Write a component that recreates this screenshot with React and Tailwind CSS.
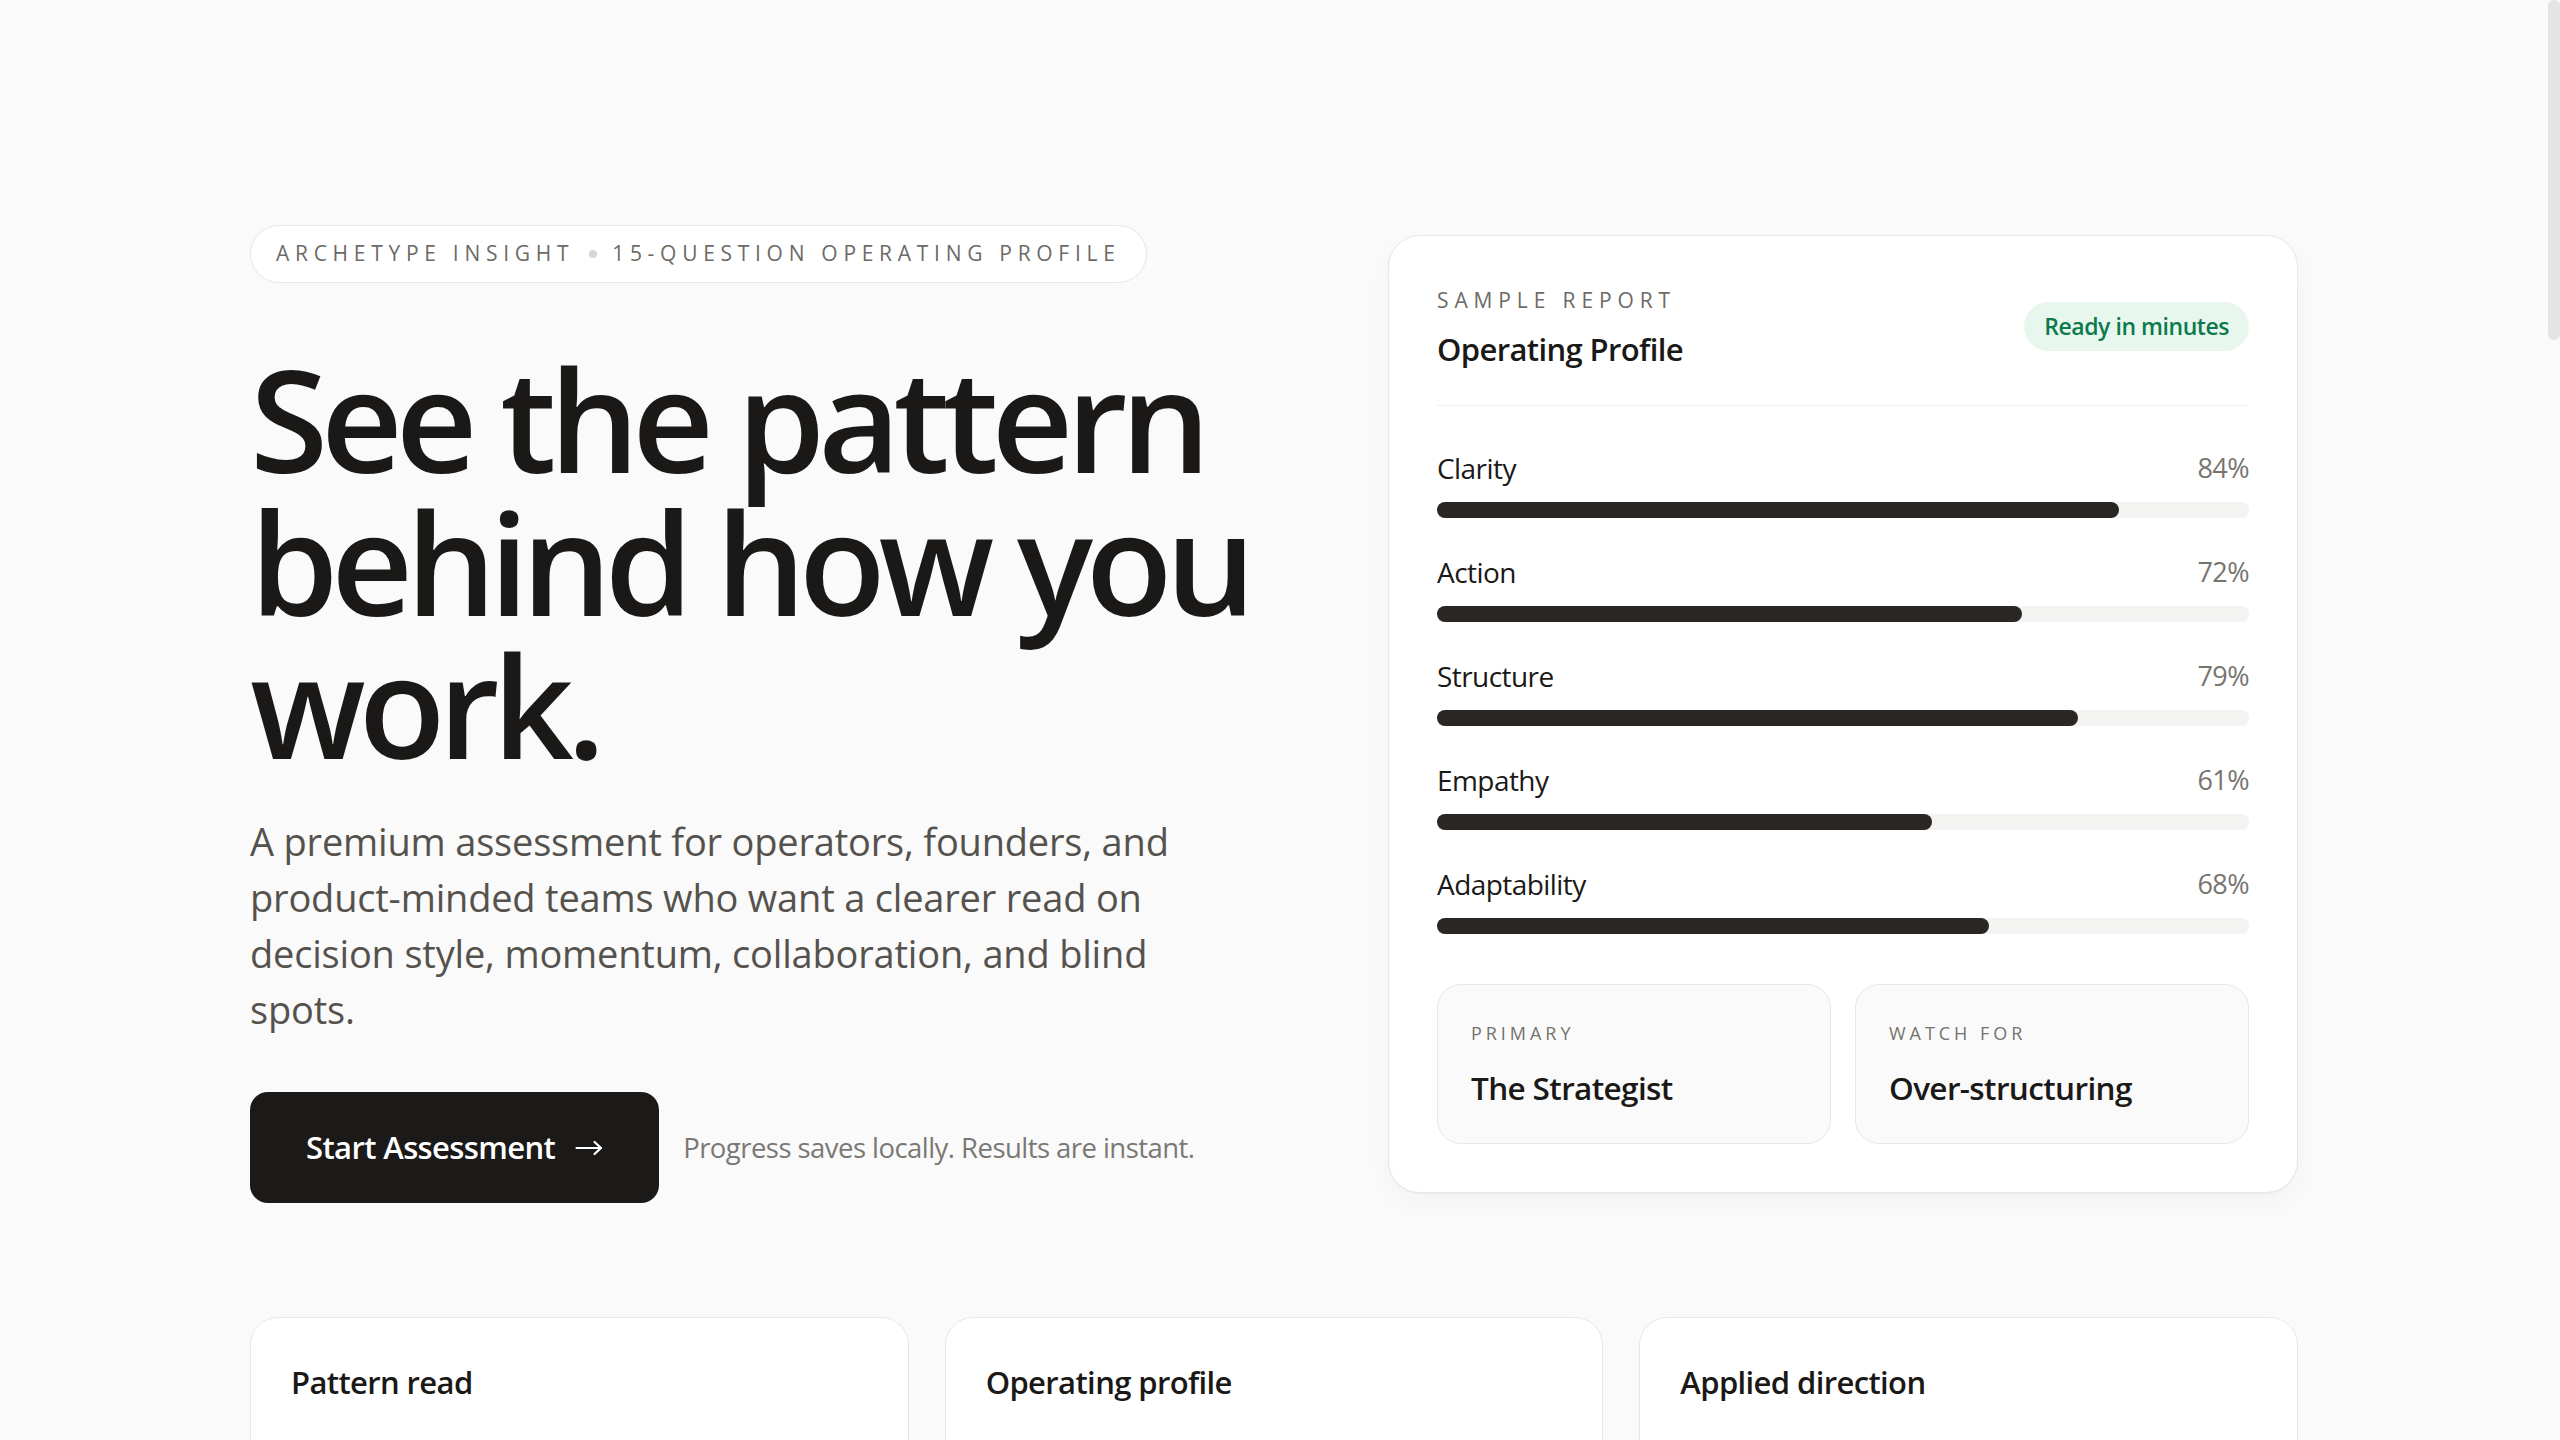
import React from "react";

const FONT = { fontFamily: '"Open Sans", "Noto Sans", "Liberation Sans", sans-serif' };

const metrics = [
  { label: "Clarity", value: 84 },
  { label: "Action", value: 72 },
  { label: "Structure", value: 79 },
  { label: "Empathy", value: 61 },
  { label: "Adaptability", value: 68 },
];

const features = [
  {
    title: "Pattern read",
    body: "A concise structured read that tracks how you decide, follow through, and frame the work in front of you.",
  },
  {
    title: "Operating profile",
    body: "Your result translates the main signals into a clear and practical portrait of how you operate.",
  },
  {
    title: "Applied direction",
    body: "The report focuses on better decisions, steadier momentum, and fewer blind spots in the work.",
  },
];

function Arrow() {
  return (
    <svg width="28" height="16" viewBox="0 0 28 16" fill="none" stroke="currentColor" strokeWidth="2.2" strokeLinecap="round" strokeLinejoin="round">
      <line x1="1.5" y1="8" x2="26" y2="8" />
      <polyline points="19.5,2 26,8 19.5,14" />
    </svg>
  );
}

export default function App() {
  return (
    <div style={FONT} className="flex min-h-screen bg-[#fafafa] text-[#1a1917]">
      <div className="min-w-0 flex-1">
        <main className="mx-auto w-[2048px] pb-[120px] pt-[225px]">
          <section className="grid grid-cols-[1fr_910px] items-center gap-[90px]">
            <div className="flex flex-col items-start">
              <div className="inline-flex h-[58px] items-center gap-[15px] rounded-full border border-[#e6e6e4] bg-white px-[25px] text-[21px] font-medium uppercase tracking-[0.272em] text-[#6d6a66]">
                <span>Archetype Insight</span>
                <span className="h-[8px] w-[8px] rounded-full bg-[#d6d6d4]" />
                <span>15-Question Operating Profile</span>
              </div>

              <h1 className="mt-[64px] text-[142px] font-[560] leading-[143px] tracking-[-0.05em] text-[#1a1917]">
                See the pattern
                <br />
                behind how you
                <br />
                work.
              </h1>

              <p className="mt-[37px] w-[970px] text-[38px] leading-[56px] tracking-[-0.005em] text-[#55524e]">
                A premium assessment for operators, founders, and product-minded teams who want a clearer read on decision style, momentum, collaboration, and blind spots.
              </p>

              <div className="mt-[55px] flex items-center gap-[24px]">
                <button className="inline-flex h-[111px] items-center gap-[20px] rounded-[18px] bg-[#1c1a19] px-[56px] text-[31px] font-semibold tracking-[-0.02em] text-white">
                  <span>Start Assessment</span>
                  <Arrow />
                </button>
                <span className="text-[27.5px] tracking-[-0.02em] text-[#7a7875]">
                  Progress saves locally. Results are instant.
                </span>
              </div>
            </div>

            <div className="rounded-[32px] border border-[#e7e7e5] bg-white p-12 shadow-[0_1px_2px_rgba(0,0,0,0.04),0_10px_30px_rgba(0,0,0,0.03)]">
              <div className="flex items-center justify-between border-b border-[#f0f0ee] pb-9">
                <div className="flex flex-col">
                  <span className="mt-[2px] text-[21px] leading-[28px] uppercase tracking-[0.28em] text-[#6d6a66]">
                    Sample Report
                  </span>
                  <span className="mt-[15px] text-[31px] font-semibold leading-[40px] tracking-[-0.02em] text-[#1a1917]">
                    Operating Profile
                  </span>
                </div>
                <span className="inline-flex h-[49px] items-center rounded-full bg-[#e8f7ee] px-[20px] text-[23px] font-semibold tracking-[-0.02em] text-[#0c7a4c]">
                  Ready in minutes
                </span>
              </div>

              <div className="mt-[44px] flex flex-col gap-9">
                {metrics.map((m) => (
                  <div key={m.label}>
                    <div className="flex h-[36px] items-center justify-between text-[28px] tracking-[-0.02em]">
                      <span className="font-medium text-[#1a1917]">{m.label}</span>
                      <span className="text-[27px] text-[#77746f]">{m.value}%</span>
                    </div>
                    <div className="mt-4 h-4 w-full rounded-full bg-[#f3f3f2]">
                      <div
                        className="h-4 rounded-full bg-[#2a2624]"
                        style={{ width: `${m.value}%` }}
                      />
                    </div>
                  </div>
                ))}
              </div>

              <div className="mt-[50px] grid grid-cols-2 gap-6">
                {[
                  ["Primary", "The Strategist"],
                  ["Watch For", "Over-structuring"],
                ].map(([k, v]) => (
                  <div
                    key={k}
                    className="flex h-[160px] flex-col justify-center rounded-[24px] border border-[#e7e7e5] bg-[#fafafa] px-[33px]"
                  >
                    <span className="text-[18px] leading-[24px] uppercase tracking-[0.22em] text-[#75726d]">
                      {k}
                    </span>
                    <span className="mt-[24px] text-[31.5px] font-semibold leading-[38px] tracking-[-0.02em] text-[#1a1917]">
                      {v}
                    </span>
                  </div>
                ))}
              </div>
            </div>
          </section>

          <section className="mt-[114px] grid grid-cols-3 gap-9">
            {features.map((f) => (
              <div
                key={f.title}
                className="rounded-[28px] border border-[#e7e7e5] bg-white px-10 pb-10 pt-[44px]"
              >
                <h3 className="text-[31px] font-semibold leading-[40px] tracking-[-0.02em] text-[#1a1917]">
                  {f.title}
                </h3>
                <p className="mt-[26px] text-[26px] leading-[42px] tracking-[-0.02em] text-[#5a5753]">
                  {f.body}
                </p>
              </div>
            ))}
          </section>
        </main>
      </div>
      <div className="w-3 shrink-0">
        <div className="sticky top-0 h-[340px] rounded-full bg-[#e4e4e2]" />
      </div>
    </div>
  );
}
